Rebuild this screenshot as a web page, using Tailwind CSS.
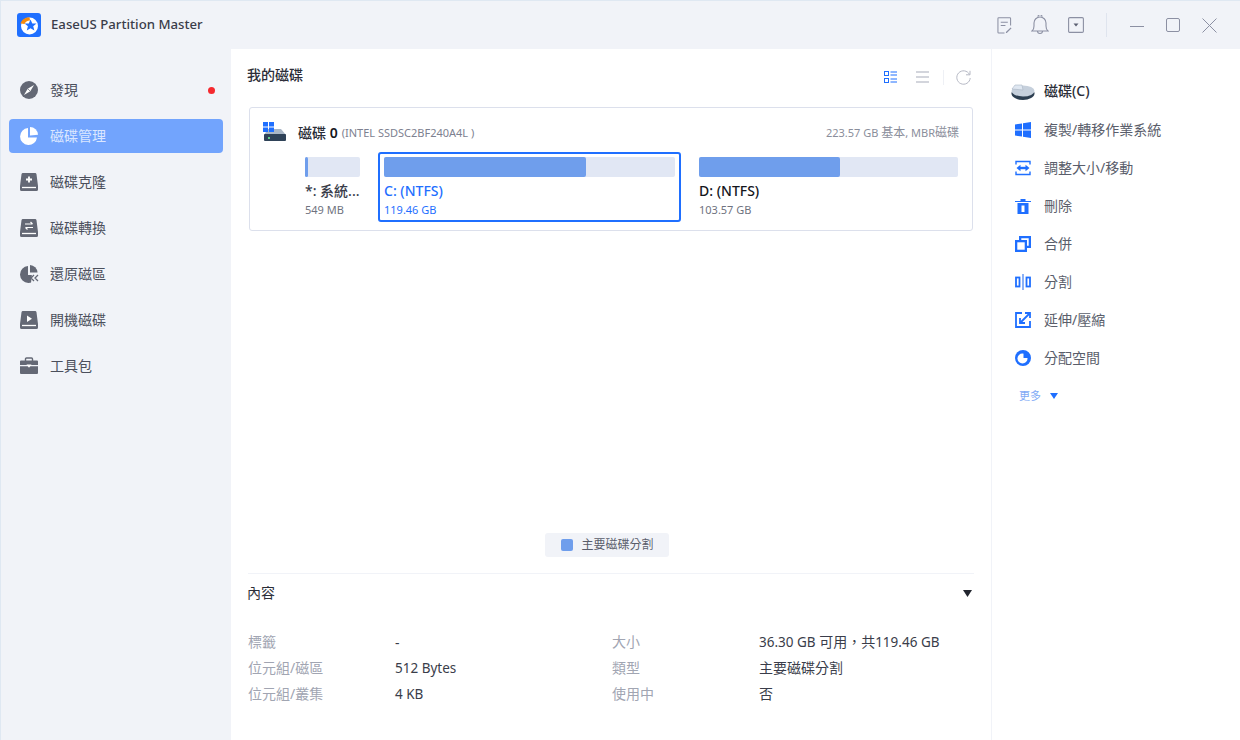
<!DOCTYPE html>
<html lang="zh-Hant">
<head>
  <meta charset="UTF-8" />
  <title>EaseUS Partition Master</title>
  <script src="https://cdn.jsdelivr.net/npm/@tailwindcss/browser@4"></script>
</head>
<body class="w-[1240px] h-[740px] overflow-hidden bg-[#f1f3f8] font-['Noto_Sans','Noto_Sans_CJK_TC',sans-serif] text-[14px] text-[#4b4f5c]">
<div class="w-full h-full flex flex-col border-t border-l border-[#dfe8f2]">

  <!-- title bar -->
  <div class="h-[48px] shrink-0 flex items-center pl-[16px]">
    <svg class="w-[24px] h-[24px]" viewBox="0 0 24 24">
      <rect width="24" height="24" rx="3" fill="#1f6fff"/>
      <circle cx="12.500" cy="13" r="8.500" fill="#fff"/>
      <path d="M3.500 10.500C4.500 7 7.500 4.500 12.500 4.200L13 7.500C10 7.800 8.500 8.800 7.500 11z" fill="#f58a0b"/>
      <path d="M13.500 6.500l1.800 4h4.200l-3.300 2.800 1.200 4.200-3.900-2.300-3.700 2.300 1.100-4.200-3.300-2.800h4.200z" fill="#1f6fff"/>
    </svg>
    <span class="ml-[10px] text-[13.200px] font-medium text-[#3a3d4a]">EaseUS Partition Master</span>
    <div class="ml-auto flex items-center text-[#8c90a3]">
      <svg class="w-[15px] h-[17px]" viewBox="0 0 16 18" fill="none" stroke="currentColor" stroke-width="1.100">
        <path d="M14.500 9V1.500a.8.8 0 0 0-.8-.8H1.800a.8.8 0 0 0-.8.8v14.700a.8.8 0 0 0 .8.8H8"/><path d="M4 5.500h7.500M4 9h5"/><path d="M9.500 16l5-5 1 1-5 5h-1z" fill="currentColor" stroke="none"/>
      </svg>
      <svg class="ml-[19px] w-[18px] h-[20px]" viewBox="0 0 18 20" fill="none" stroke="currentColor" stroke-width="1.100">
        <path d="M1 16c1.500-1 2-2.500 2-5V8a6 6 0 0 1 12 0v3c0 2.500.5 4 2 5z"/><path d="M7 1.800a2 2 0 0 1 4 0"/><path d="M6.500 16a2.500 2.500 0 0 0 5 0"/>
      </svg>
      <svg class="ml-[19px] w-[16px] h-[16px]" viewBox="0 0 16 16" fill="none" stroke="currentColor" stroke-width="1.100">
        <rect x=".6" y=".6" width="14.800" height="14.800" rx="1.200"/><path d="M5.500 6.500h5L8 9.500z" fill="#5c6072" stroke="none"/>
      </svg>
      <div class="ml-[22px] w-px h-[24px] bg-[#dfe4ee]"></div>
      <div class="ml-[23px] w-[14px] h-px bg-[#8c90a3] mt-[3px]"></div>
      <div class="ml-[22px] w-[14px] h-[14px] rounded-[2px] border border-[#8c90a3]"></div>
      <svg class="ml-[22px] mr-[23px] w-[15px] h-[15px]" viewBox="0 0 15 15" fill="none" stroke="currentColor" stroke-width="1"><path d="M.5.500l14 14M14.500.500l-14 14"/></svg>
    </div>
  </div>

  <div class="flex-1 flex min-h-0">

    <!-- sidebar -->
    <nav class="w-[230px] shrink-0 pt-[24px] pl-[8px] pr-[8px] flex flex-col gap-[12px]">
      <div class="h-[34px] flex items-center pl-[11px] pr-[8px]">
        <svg class="w-[18px] h-[18px]" viewBox="0 0 18 18"><circle cx="9" cy="9" r="9" fill="#646875"/><path d="M14 4L10.300 10.300 4 14 7.700 7.700z" fill="#fff"/><path d="M7.700 7.700L10.300 10.300" stroke="#646875" stroke-width=".7"/></svg>
        <span class="ml-[12px] pb-[2px]">發現</span>
        <span class="ml-auto w-[7px] h-[7px] rounded-full bg-[#f5292f]"></span>
      </div>
      <div class="h-[34px] flex items-center pl-[11px] rounded-[4px] bg-[#72a4fd] text-[#dbe7ff]">
        <svg class="w-[18px] h-[18px]" viewBox="0 0 18 18" fill="#fff"><path d="M8 1v9.500h9A8.500 8.500 0 1 1 8 1z"/><path d="M10 0a8 8 0 0 1 8 7.700l-8 .8z"/></svg>
        <span class="ml-[12px] pb-[2px]">磁碟管理</span>
      </div>
      <div class="h-[34px] flex items-center pl-[11px]">
        <svg class="w-[18px] h-[18px]" viewBox="0 0 18 18"><path d="M3 0h12a1.500 1.500 0 0 1 1.500 1.200L18 13v3.500a1.500 1.500 0 0 1-1.500 1.500h-15A1.500 1.500 0 0 1 0 16.500V13L1.500 1.200A1.500 1.500 0 0 1 3 0z" fill="#646875"/><path d="M2 14.500h14" stroke="#fff" stroke-width="1.300"/><path d="M9 3.500v6M6 6.500h6" stroke="#fff" stroke-width="1.800"/></svg>
        <span class="ml-[12px] pb-[2px]">磁碟克隆</span>
      </div>
      <div class="h-[34px] flex items-center pl-[11px]">
        <svg class="w-[18px] h-[18px]" viewBox="0 0 18 18"><path d="M3 0h12a1.500 1.500 0 0 1 1.500 1.200L18 13v3.500a1.500 1.500 0 0 1-1.500 1.500h-15A1.500 1.500 0 0 1 0 16.500V13L1.500 1.200A1.500 1.500 0 0 1 3 0z" fill="#646875"/><path d="M2 14.500h14" stroke="#fff" stroke-width="1.300"/><path d="M5 5h7.500M10.500 3l2 2M13 8.500H5.500M7.500 10.500l-2-2" stroke="#fff" stroke-width="1.200" fill="none"/></svg>
        <span class="ml-[12px] pb-[2px]">磁碟轉換</span>
      </div>
      <div class="h-[34px] flex items-center pl-[11px]">
        <svg class="w-[19px] h-[18px]" viewBox="0 0 19 18"><path d="M8 1v9h9A8.500 8.500 0 1 1 8 1z" fill="#646875"/><path d="M10 0a8 8 0 0 1 7.500 7.500H10z" fill="#646875"/><path d="M12 9l6 0 1 9h-8z" fill="#f1f3f8"/><path d="M14 10l-3 3 3 3M18 10l-3 3 3 3" fill="none" stroke="#646875" stroke-width="1.300"/></svg>
        <span class="ml-[11px] pb-[2px]">還原磁區</span>
      </div>
      <div class="h-[34px] flex items-center pl-[11px]">
        <svg class="w-[18px] h-[18px]" viewBox="0 0 18 18"><path d="M3 0h12a1.500 1.500 0 0 1 1.500 1.200L18 13v3.500a1.500 1.500 0 0 1-1.500 1.500h-15A1.500 1.500 0 0 1 0 16.500V13L1.500 1.200A1.500 1.500 0 0 1 3 0z" fill="#646875"/><path d="M2 14.500h14" stroke="#fff" stroke-width="1.300"/><path d="M7 4.500l5 3.300-5 3.200z" fill="#fff"/></svg>
        <span class="ml-[12px] pb-[2px]">開機磁碟</span>
      </div>
      <div class="h-[34px] flex items-center pl-[11px]">
        <svg class="w-[18px] h-[18px]" viewBox="0 0 18 18"><path d="M5.500 4V2a1 1 0 0 1 1-1h5a1 1 0 0 1 1 1v2" fill="none" stroke="#646875" stroke-width="1.400"/><path d="M1 3.500h16a1 1 0 0 1 1 1V8H0V4.500a1 1 0 0 1 1-1zM0 9.200h18V16a1 1 0 0 1-1 1H1a1 1 0 0 1-1-1z" fill="#646875"/><path d="M6.500 7.500h5L9 10.800z" fill="#fff"/></svg>
        <span class="ml-[12px] pb-[2px]">工具包</span>
      </div>
    </nav>

    <!-- main -->
    <main class="w-[760px] shrink-0 bg-white px-[17px] flex flex-col">
      <div class="h-[58px] shrink-0 flex items-center">
        <h1 class="font-medium text-[#2b2e38] -mt-[7px] -ml-[1px]">我的磁碟</h1>
        <div class="ml-auto flex items-center -mt-[2px] mr-[3px]">
          <svg class="w-[13px] h-[12px]" viewBox="0 0 13 12" fill="none" stroke="#1f6fff" stroke-width="1"><rect x=".5" y=".5" width="4" height="4"/><rect x=".5" y="7.500" width="4" height="4"/><path d="M6.500 1h6.500M6.500 4h6.500M6.500 8h6.500M6.500 11h6.500"/></svg>
          <svg class="ml-[19px] w-[13px] h-[12px]" viewBox="0 0 13 12" fill="none" stroke="#a7abb9" stroke-width="1"><path d="M0 1h13M0 6h13M0 11h13"/></svg>
          <div class="ml-[14px] w-px h-[15px] bg-[#eef0f5]"></div>
          <svg class="ml-[12px] w-[15px] h-[15px]" viewBox="0 0 15 15" fill="none" stroke="#b5b8c4" stroke-width="1"><path d="M13.500 4.500A6.700 6.700 0 1 0 14.200 8"/><path d="M14 .8v4h-4"/></svg>
        </div>
      </div>

      <!-- disk card -->
      <section class="h-[124px] shrink-0 rounded-[3px] border border-[#dce0ec] mx-px px-[13px] pt-[13px]">
        <div class="flex items-center h-[24px]">
          <svg class="w-[24px] h-[20px] -mt-[3px]" viewBox="0 0 24 20">
            <path d="M5 7h13l5 6H1z" fill="#a9b6c6"/><rect x="1" y="12" width="22" height="7" rx="1" fill="#2f4258"/><rect x="5" y="15" width="2" height="2" fill="#5fd08a"/>
            <rect x="0" y="0" width="5" height="4.500" fill="#1f6fff"/><rect x="6" y="0" width="5" height="4.500" fill="#1f6fff"/><rect x="0" y="5.500" width="5" height="4.500" fill="#1f6fff"/><rect x="6" y="5.500" width="5" height="4.500" fill="#1f6fff"/>
          </svg>
          <span class="ml-[11px] pb-[2px] font-medium text-[#2b2e38]">磁碟 <b class="font-semibold text-[#14161d]">0</b></span>
          <span class="ml-[4px] text-[11px] text-[#7d8190]">(INTEL SSDSC2BF240A4L )</span>
          <span class="ml-auto text-[11px] text-[#8a8e9b]">223.57 GB <span class="text-[12px]">基本</span>, MBR<span class="text-[12px]">磁碟</span></span>
        </div>
        <div class="flex mt-[8px]">
          <div class="ml-[42px] w-[55px] pt-[4px]">
            <div class="h-[20px] rounded-[2px] bg-[#e1e7f4]"><div class="w-[3px] h-full rounded-[2px] bg-[#6f9eec]"></div></div>
            <div class="mt-[5px] text-[14px] leading-[18px] font-medium text-[#3a3d4a] whitespace-nowrap overflow-hidden">*: 系統...</div>
            <div class="mt-[2px] text-[11px] leading-[15px] text-[#6f7380]">549 MB</div>
          </div>
          <div class="ml-[18px] w-[303px] h-[70px] rounded-[3px] border-2 border-[#1f6fff] px-[4px] pt-[2px] -mt-[1px]">
            <div class="h-[20px] rounded-[2px] bg-[#e1e7f4] mt-[1px]"><div class="w-[202px] h-full rounded-[2px] bg-[#6f9eec]"></div></div>
            <div class="mt-[5px] text-[14px] leading-[18px] font-medium text-[#1f6fff]">C: (NTFS)</div>
            <div class="mt-[2px] text-[11px] leading-[15px] text-[#1f6fff]">119.46 GB</div>
          </div>
          <div class="ml-[18px] w-[259px] pt-[4px]">
            <div class="h-[20px] rounded-[2px] bg-[#e1e7f4]"><div class="w-[141px] h-full rounded-[2px] bg-[#6f9eec]"></div></div>
            <div class="mt-[5px] text-[14px] leading-[18px] font-medium text-[#14161d]">D: (NTFS)</div>
            <div class="mt-[2px] text-[11px] leading-[15px] text-[#6f7380]">103.57 GB</div>
          </div>
        </div>
      </section>

      <!-- legend -->
      <div class="flex-1 flex items-end justify-center pb-[16px]">
        <div class="h-[24px] w-[124px] rounded-[3px] bg-[#f1f3f8] flex items-center pl-[16px] ml-[-9px] text-[12px] text-[#5a5e6b]">
          <span class="w-[12px] h-[12px] rounded-[2px] bg-[#6f9eec]"></span>
          <span class="ml-[9px]">主要磁碟分割</span>
        </div>
      </div>

      <!-- properties -->
      <section class="h-[167px] shrink-0 border-t border-[#f1f3f8]">
        <div class="flex items-center h-[38px]">
          <span class="pb-[2px] -ml-[1px] text-[#2b2e38]">內容</span>
          <svg class="ml-auto mr-[2px] w-[9px] h-[7px]" viewBox="0 0 9 7"><path d="M0 0h9L4.500 7z" fill="#22252e"/></svg>
        </div>
        <dl class="mt-[17px] grid grid-cols-[147px_217px_147px_1fr] auto-rows-[26px] items-center">
          <dt class="pb-[2px] text-[#a1a5b2]">標籤</dt><dd class="text-[#3a3d4a]">-</dd>
          <dt class="pb-[2px] text-[#a1a5b2]">大小</dt><dd class="text-[#3a3d4a] text-[13.500px]">36.30 GB <span class="text-[14px]">可用，共</span>119.46 GB</dd>
          <dt class="pb-[2px] text-[#a1a5b2]">位元組/磁區</dt><dd class="text-[#3a3d4a] text-[13.500px]">512 Bytes</dd>
          <dt class="pb-[2px] text-[#a1a5b2]">類型</dt><dd class="pb-[2px] text-[#3a3d4a]">主要磁碟分割</dd>
          <dt class="pb-[2px] text-[#a1a5b2]">位元組/叢集</dt><dd class="text-[#3a3d4a] text-[13.500px]">4 KB</dd>
          <dt class="pb-[2px] text-[#a1a5b2]">使用中</dt><dd class="pb-[2px] text-[#3a3d4a]">否</dd>
        </dl>
      </section>
    </main>

    <!-- actions -->
    <aside class="flex-1 bg-white border-l border-[#f1f3f8] pt-[24px] text-[#5a5e6b]">
      <div class="h-[38px] flex items-center pl-[19px]">
        <svg class="w-[24px] h-[16px]" viewBox="0 0 24 16"><ellipse cx="12" cy="9.500" rx="11.500" ry="6.500" fill="#2c3e50"/><ellipse cx="12" cy="7" rx="11.500" ry="5.500" fill="#c6d0dc"/><path d="M1 5L4 1h7l1 5z" fill="#dfe7f1" stroke="#aab6c5" stroke-width=".6"/></svg>
        <span class="ml-[9px] pb-[4px] font-medium text-[#2b2e38]">磁碟(C)</span>
      </div>
      <div class="h-[38px] flex items-center pl-[23px]">
        <svg class="w-[16px] h-[16px]" viewBox="0 0 16 16" fill="#1f6fff"><path d="M0 2.500l7-1v6H0zM8 1.300L16 0v7.500H8zM0 8.500h7v6l-7-1zM8 8.500h8V16l-8-1.300z"/></svg>
        <span class="ml-[13px] pb-[2px]">複製/轉移作業系統</span>
      </div>
      <div class="h-[38px] flex items-center pl-[23px]">
        <svg class="w-[16px] h-[16px]" viewBox="0 0 16 16" fill="none" stroke="#1f6fff" stroke-width="1.400"><path d="M1 4.500V1.500h14v3M1 11.500v3h14v-3"/><path d="M4 8h8" stroke-width="2.400"/><path d="M5.500 4.800L1.500 8l4 3.200zM10.500 4.800l4 3.200-4 3.200z" fill="#1f6fff" stroke="none"/></svg>
        <span class="ml-[13px] pb-[2px]">調整大小/移動</span>
      </div>
      <div class="h-[38px] flex items-center pl-[23px]">
        <svg class="w-[16px] h-[16px]" viewBox="0 0 16 16" fill="#1f6fff"><path d="M0 3h5.500V1h5v2H16v1H0z"/><path fill-rule="evenodd" d="M2.500 5h11v11h-11zM6.500 7.500v6.500h3V7.500z"/></svg>
        <span class="ml-[13px] pb-[2px]">刪除</span>
      </div>
      <div class="h-[38px] flex items-center pl-[23px]">
        <svg class="w-[16px] h-[16px]" viewBox="0 0 14 14" fill="none" stroke="#1f6fff" stroke-width="2"><path d="M4.500 4.500V1h8.500v8.500H9.500"/><rect x="1" y="4.500" width="8.500" height="8.500"/></svg>
        <span class="ml-[13px] pb-[2px]">合併</span>
      </div>
      <div class="h-[38px] flex items-center pl-[23px]">
        <svg class="w-[16px] h-[16px]" viewBox="0 0 16 16" fill="none" stroke="#1f6fff" stroke-width="1.800"><rect x="1" y="3.500" width="3.500" height="9"/><rect x="11.500" y="3.500" width="3.500" height="9"/><path d="M8 0v16" stroke="#7ea9f5"/></svg>
        <span class="ml-[13px] pb-[2px]">分割</span>
      </div>
      <div class="h-[38px] flex items-center pl-[23px]">
        <svg class="w-[16px] h-[16px]" viewBox="0 0 16 16" fill="none" stroke="#1f6fff" stroke-width="1.800"><path d="M7 1H1v14h14V9"/><path d="M14.500 1.500L5 11"/><path d="M5 6v5h5"/><path d="M10 1h5v5"/></svg>
        <span class="ml-[13px] pb-[2px]">延伸/壓縮</span>
      </div>
      <div class="h-[38px] flex items-center pl-[23px]">
        <svg class="w-[16px] h-[16px]" viewBox="0 0 16 16"><circle cx="8" cy="8" r="8" fill="#1f6fff"/><circle cx="7.500" cy="8.500" r="5" fill="#fff"/><path d="M8.500 3h5v5h-5z" fill="#1f6fff"/></svg>
        <span class="ml-[13px] pb-[2px]">分配空間</span>
      </div>
      <div class="h-[38px] flex items-center pl-[27px] text-[11px] text-[#7ea9f5]">
        <span>更多</span>
        <svg class="ml-[9px] w-[8px] h-[6px]" viewBox="0 0 8 6"><path d="M0 0h8L4 6z" fill="#1f6fff"/></svg>
      </div>
    </aside>
  </div>
</div>
</body>
</html>
